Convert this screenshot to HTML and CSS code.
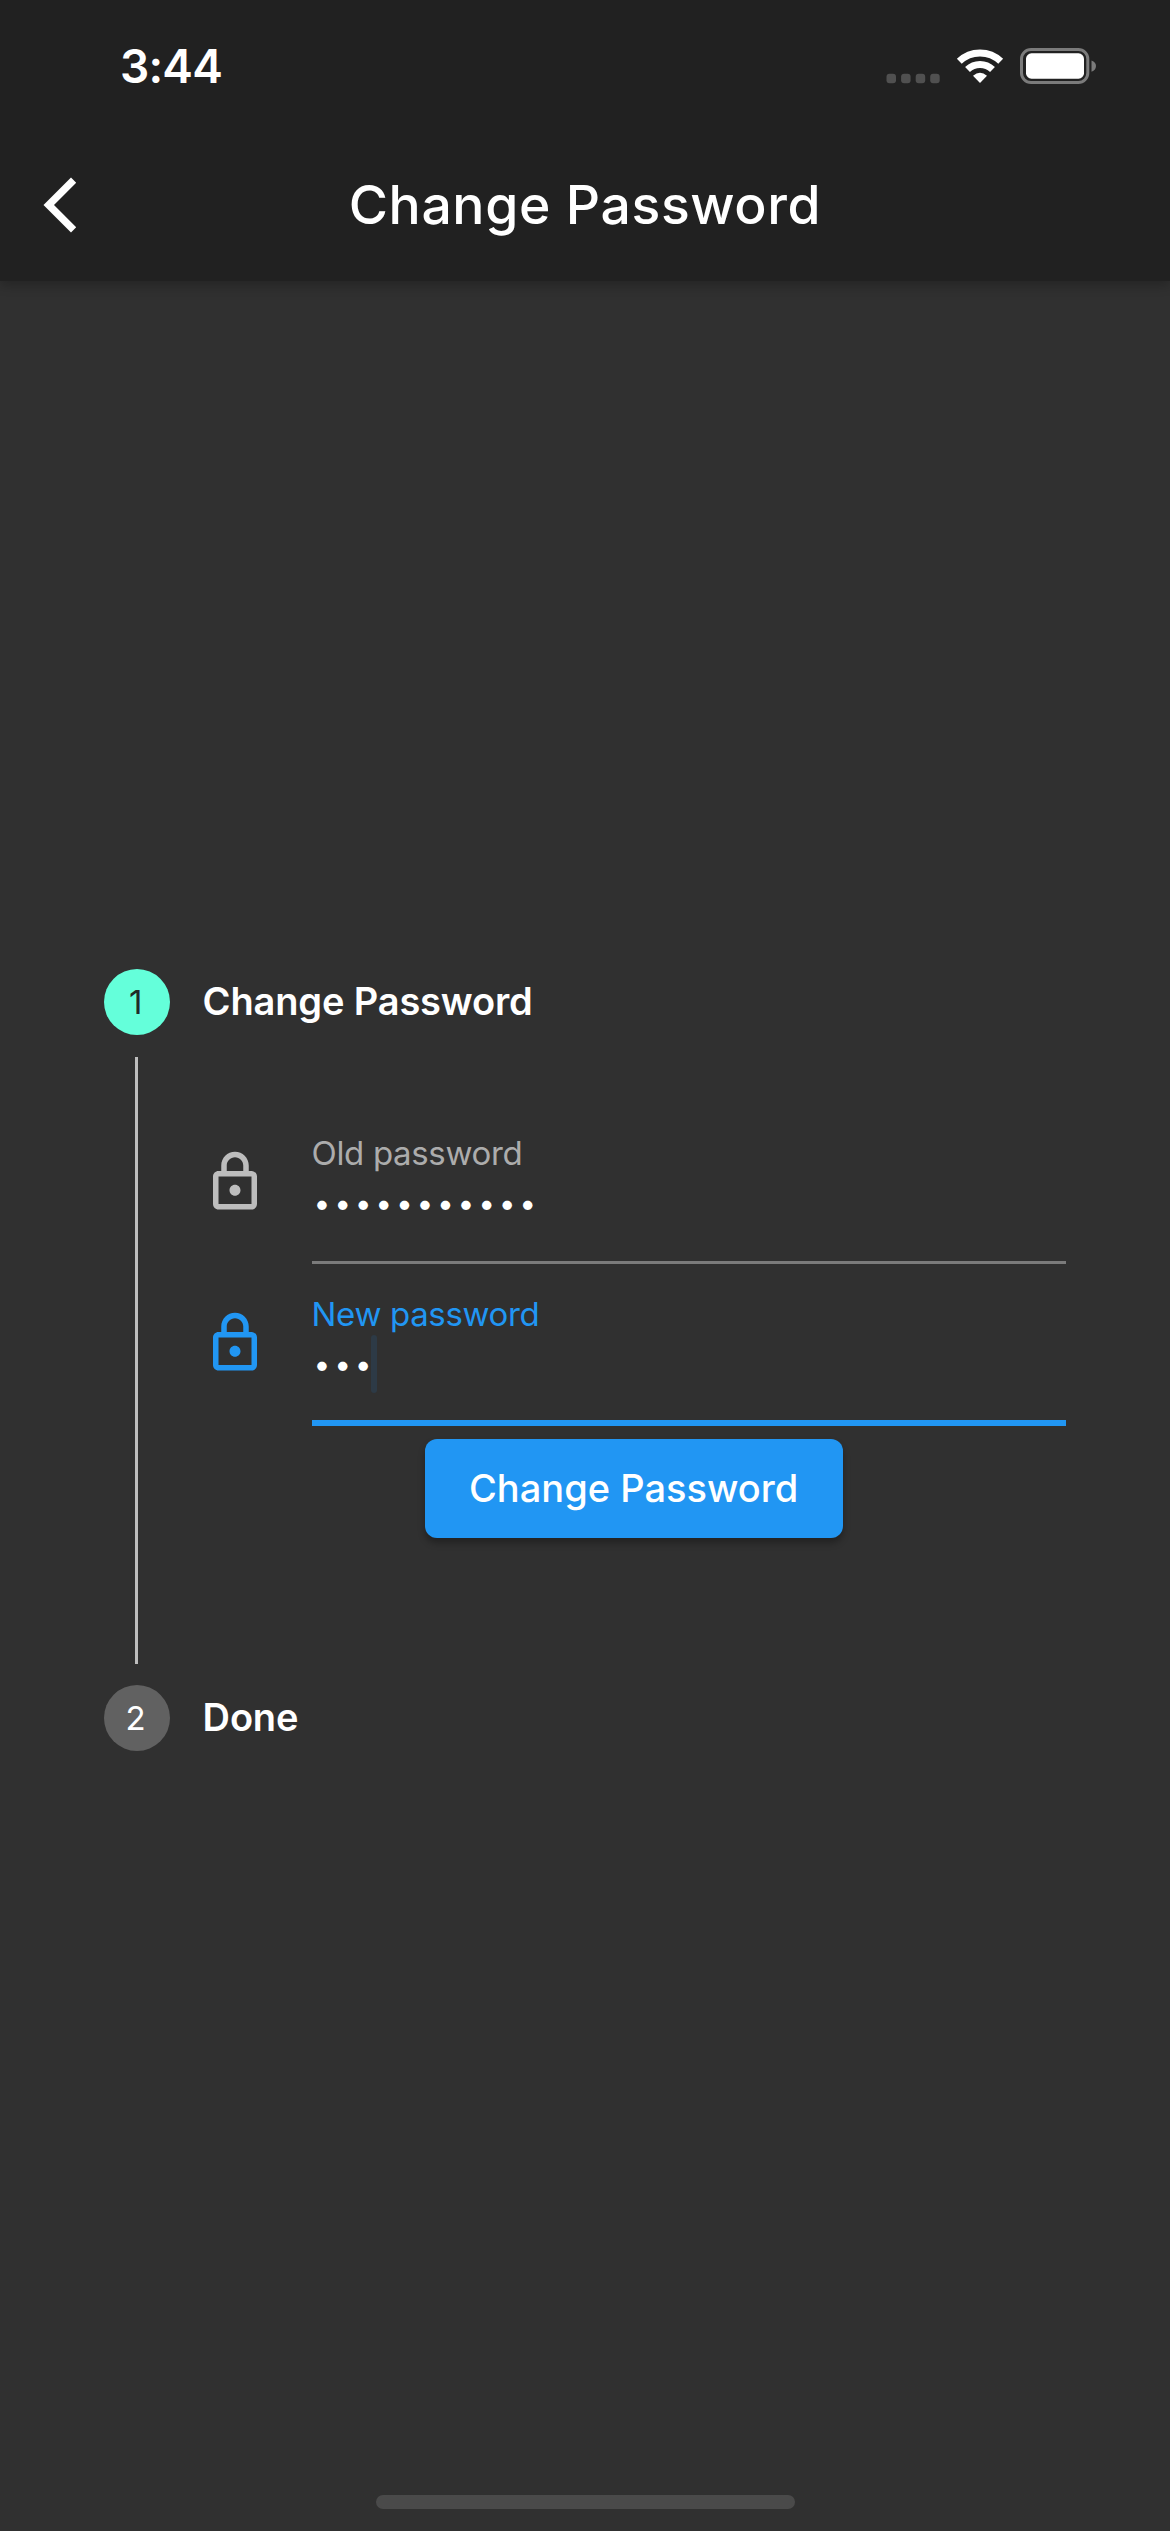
FILE: index.html
```html
<!DOCTYPE html>
<html lang="en">
<head>
<meta charset="utf-8">
<title>Change Password</title>
<link rel="stylesheet" href="styles.css">
</head>
<body>
<div class="screen">
  <header class="header">
    <div class="status">
      <span class="time">3:44</span>
      <svg class="status-icons" width="220" height="50" viewBox="880 40 220 50">
        <g fill="#505050"><rect x="886.5" y="73.7" width="9.5" height="9.5" rx="3"/><rect x="901.1" y="73.7" width="9.5" height="9.5" rx="3"/><rect x="915.7" y="73.7" width="9.5" height="9.5" rx="3"/><rect x="930.2" y="73.7" width="9.5" height="9.5" rx="3"/></g>
        <g fill="none" stroke="#fff" stroke-width="7"><path d="M959.3 61.2A30 30 0 0 1 1000.7 61.2"/><path d="M967.5 69.6A18 18 0 0 1 992.5 69.6"/></g>
        <path d="M973 75.8Q980 69.5 987 75.8L980 83Z" fill="#fff"/>
        <rect x="1021.5" y="49.5" width="66.3" height="33" rx="9.5" fill="none" stroke="#7b7b7b" stroke-width="3"/>
        <rect x="1026" y="53.3" width="58" height="25.4" rx="5.5" fill="#fff"/>
        <path d="M1091.5 60.5Q1096 62 1096 66T1091.5 71.7Z" fill="#7b7b7b"/>
      </svg>
    </div>
    <div class="toolbar">
      <svg class="back" width="34" height="56" viewBox="43 177 34 56"><path d="M71 177.5L76.2 182.8L54 205L76.2 227.2L71 232.5L43.5 205Z" fill="#fff"/></svg>
      <h1 class="title">Change Password</h1>
    </div>
  </header>
  <main class="stepper">
    <section class="step">
      <span class="badge badge-active">1</span>
      <h2 class="step-title">Change Password</h2>
    </section>
    <section class="content">
      <div class="rail"></div>
      <form class="form">
        <div class="field">
          <svg class="lock" viewBox="0 0 24 24"><path fill="currentColor" d="M18 8h-1V6c0-2.76-2.24-5-5-5S7 3.24 7 6v2H6c-1.1 0-2 .9-2 2v10c0 1.1.9 2 2 2h12c1.1 0 2-.9 2-2V10c0-1.1-.9-2-2-2zM9 6c0-1.66 1.34-3 3-3s3 1.34 3 3v2H9V6zm9 14H6V10h12v10zm-6-3c1.1 0 2-.9 2-2s-.9-2-2-2-2 .9-2 2 .9 2 2 2z"/></svg>
          <div class="input">
            <span class="label">Old password</span>
            <span class="value"><span class="dots">•••••••••••</span></span>
          </div>
        </div>
        <div class="field field-focused">
          <svg class="lock" viewBox="0 0 24 24"><path fill="currentColor" d="M18 8h-1V6c0-2.76-2.24-5-5-5S7 3.24 7 6v2H6c-1.1 0-2 .9-2 2v10c0 1.1.9 2 2 2h12c1.1 0 2-.9 2-2V10c0-1.1-.9-2-2-2zM9 6c0-1.66 1.34-3 3-3s3 1.34 3 3v2H9V6zm9 14H6V10h12v10zm-6-3c1.1 0 2-.9 2-2s-.9-2-2-2-2 .9-2 2 .9 2 2 2z"/></svg>
          <div class="input">
            <span class="label">New password</span>
            <span class="value"><span class="dots">•••</span><i class="caret"></i></span>
          </div>
        </div>
        <button class="submit" type="button">Change Password</button>
      </form>
    </section>
    <section class="step">
      <span class="badge">2</span>
      <h2 class="step-title">Done</h2>
    </section>
  </main>
  <div class="home"></div>
</div>
</body>
</html>
```
FILE: styles.css
```css
* { box-sizing: border-box; }
body { margin: 0; background: #303030; color: #fff; font-family: Inter, "Liberation Sans", sans-serif; }
.screen { width: 1170px; height: 2531px; display: flex; flex-direction: column; align-items: center; overflow: hidden; }
.header { width: 100%; height: 281px; flex: none; background: #212121; box-shadow: 0 5px 10px rgba(0,0,0,.22); }
.status { height: 129px; padding: 40px 70px 0 120px; display: flex; justify-content: space-between; }
.time { font-size: 46px; line-height: 53px; font-weight: 600; letter-spacing: -.8px; }
.status-icons { display: block; }
.toolbar { height: 152px; padding: 0 43px; display: grid; grid-template-columns: 34px 1fr 34px; align-items: center; }
.title { margin: 0; font-size: 53.5px; line-height: 64px; font-weight: 500; letter-spacing: .6px; text-align: center; white-space: nowrap; }
.back { display: block; }
.stepper { width: 100%; padding: 688px 104px 0 103.6px; }
.step { display: flex; align-items: center; gap: 33px; height: 66px; }
.badge { width: 66px; height: 66px; padding: 0 2px 1px 0; border-radius: 50%; background: #616161; display: grid; place-items: center; font-size: 33px; line-height: 40px; }
.badge-active { background: #64ffda; color: #202b28; }
.step-title { margin: 0; padding-bottom: 2px; font-size: 38px; line-height: 46px; font-weight: 600; letter-spacing: -.15px; }
.content { display: flex; height: 650px; padding: 22px 0 21px 31px; }
.rail { width: 3px; background: #bdbdbd; }
.form { width: 864px; margin-left: 64px; padding-top: 70px; display: flex; flex-direction: column; align-items: center; }
.field { display: flex; height: 161px; width: 100%; color: #bdbdbd; flex: none; }
.lock { width: 66px; height: 66px; margin: 22px 44px 0 0; flex: none; }
.input { width: 754px; height: 137px; display: flex; flex-direction: column; border-bottom: 3px solid #7b7b7b; }
.label { font-size: 33px; line-height: 40px; margin-top: 6px; color: #acacac; white-space: nowrap; letter-spacing: -.35px; }
.value { display: flex; color: #fff; height: 58px; margin-top: 1px; }
.dots { font-size: 30px; line-height: 58px; padding-left: 2px; letter-spacing: 3.7px; }
.field-focused { color: #2196f3; height: 162px; }
.field-focused .input { height: 138px; border-bottom: 6px solid #2196f3; }
.field-focused .label { color: #2196f3; }
.caret { width: 6px; height: 58px; margin-left: -4px; background: #2d3a46; border-radius: 3px; }
.submit { width: 418px; height: 99px; margin-top: -11px; padding: 0 0 2px; border: 0; border-radius: 12px; background: #2196f3; color: #fff; font: 500 38px/46px Inter, sans-serif; box-shadow: 0 5px 7px rgba(0,0,0,.3); }
.home { width: 419px; height: 14px; border-radius: 7px; background: #4a4a4a; margin-top: auto; margin-bottom: 22px; }
```
